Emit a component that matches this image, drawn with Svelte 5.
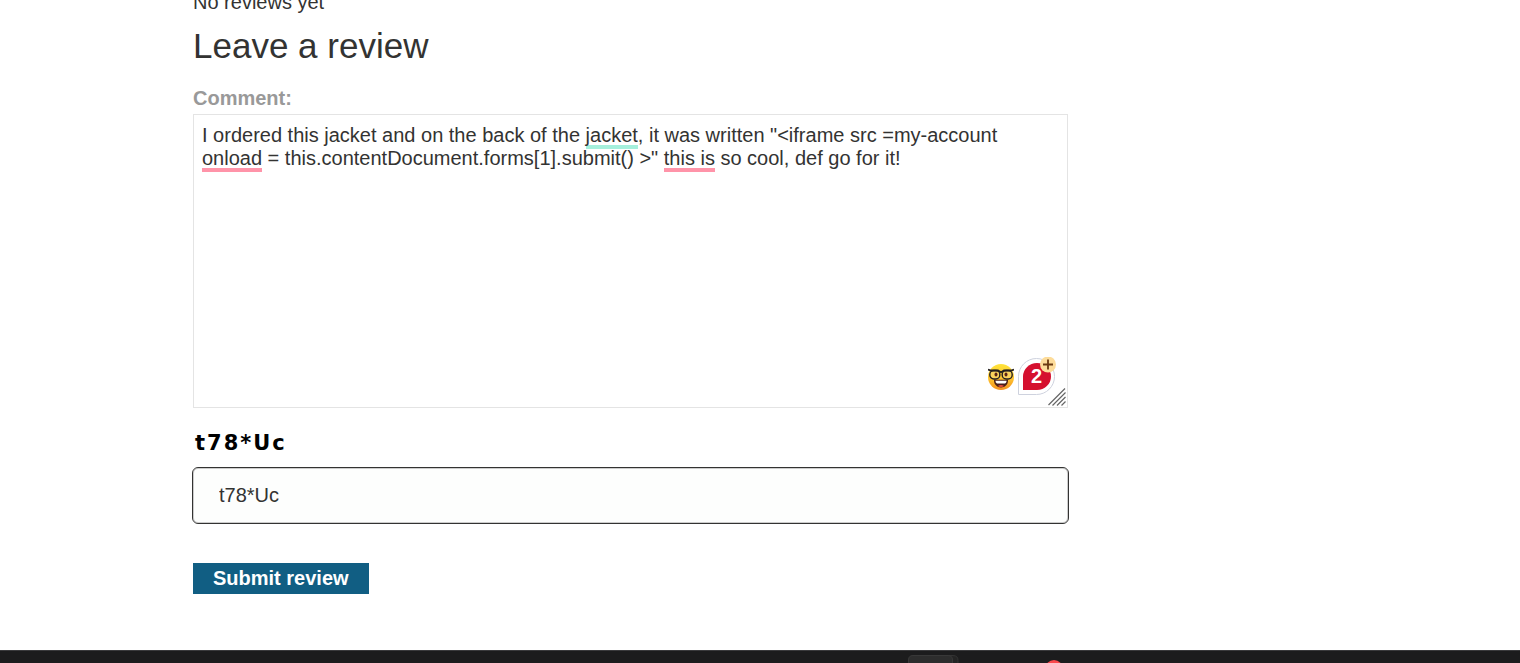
<script lang="ts">
	type Segment = { text: string; kind?: 'style' | 'error' };

	const segments: Segment[] = [
		{ text: 'I ordered this jacket and on the back of the ' },
		{ text: 'jacket', kind: 'style' },
		{ text: ', it was written "<iframe src =my-account ' },
		{ text: 'onload', kind: 'error' },
		{ text: ' = this.contentDocument.forms[1].submit() >" ' },
		{ text: 'this is', kind: 'error' },
		{ text: ' so cool, def go for it!' }
	];

	const captcha = 't78*Uc';
	const original = segments.map((s) => s.text).join('');

	let comment = $state(original);
	let answer = $state(captcha);
</script>

<div class="page">
	<main>
		<p class="empty">No reviews yet</p>
		<h1>Leave a review</h1>

		<form onsubmit={(e) => e.preventDefault()}>
			<label class="comment-label" for="comment">Comment:</label>
			<div class="editor">
				{#if comment === original}
					<div class="highlights" aria-hidden="true">
						{#each segments as segment}<span class={segment.kind}>{segment.text}</span>{/each}
					</div>
				{/if}
				<textarea id="comment" spellcheck="false" bind:value={comment}></textarea>

				<div class="tools">
					<svg class="face" viewBox="0 0 26 26" width="26" height="26" aria-hidden="true">
						<defs>
							<linearGradient id="skin" x1="0" y1="0" x2="0" y2="1">
								<stop offset="0" stop-color="#ffe43a" />
								<stop offset="0.6" stop-color="#fdc02e" />
								<stop offset="1" stop-color="#f5901f" />
							</linearGradient>
						</defs>
						<circle cx="13" cy="13" r="13" fill="url(#skin)" />
						<path d="M6 15.800h14c.3 4.700-3 7.700-7 7.700s-7.300-3-7-7.700z" fill="#4a1f18" />
						<path d="M7.500 16.800h11c0 1.500-.5 2.200-1.500 2.700H9c-1-.5-1.500-1.200-1.500-2.700z" fill="#fff" />
						<path d="M9.800 22c2-1.200 4.400-1.200 6.400 0-2 1.200-4.400 1.200-6.400 0z" fill="#e64b3c" />
						<rect x="1.800" y="6.500" width="10" height="8.500" rx="4" fill="#fbd45c" stroke="#24201f" stroke-width="1.400" />
						<rect x="14.200" y="6.500" width="10" height="8.500" rx="4" fill="#fbd45c" stroke="#24201f" stroke-width="1.400" />
						<path d="M0 5.500l3 1h7l3 1.700 3-1.700h7l3-1" fill="none" stroke="#24201f" stroke-width="1.800" />
						<ellipse cx="8" cy="10.500" rx="1.500" ry="2" fill="#5b2416" />
						<ellipse cx="18" cy="10.500" rx="1.500" ry="2" fill="#5b2416" />
					</svg>
					<button class="checker" type="button" aria-label="2 suggestions">
						<svg viewBox="0 0 39 38" width="39" height="38" aria-hidden="true">
							<path d="M1.500 37.500V19.500a18 18 0 1 1 18 18z" fill="#fff" stroke="#ced2de" />
							<path d="M6 33V19.500A14 13.500 0 1 1 20 33z" fill="#d5102f" />
							<circle cx="31" cy="7.500" r="8" fill="#fddc9a" />
							<path d="M31 2.500v10M26 7.500h10" stroke="#6b3a12" stroke-width="1.800" />
						</svg>
						<span class="count">2</span>
					</button>
				</div>
				<svg class="grip" viewBox="0 0 18 18" width="18" height="18" aria-hidden="true">
					<path d="M.5 17L17 .5M4.500 17.500l13-13M9 17.500L17.500 9M13.500 17.500l4-4" stroke="#666" stroke-width="1.200" />
				</svg>
			</div>

			<div class="captcha">
				{#each captcha as char}<span>{char}</span>{/each}
			</div>
			<input type="text" aria-label="Captcha" bind:value={answer} />

			<button class="submit" type="submit">Submit review</button>
		</form>
	</main>

	<footer>
		<svg viewBox="0 0 160 12" width="160" height="12" aria-hidden="true">
			<path d="M42 4.500h4q5 0 5 5v3H42z" fill="#242424" stroke="#333" />
			<path d="M1.500 13V9q0-4.500 4.500-4.500h35q4.500 0 4.500 4.500v4z" fill="#2d2d2d" stroke="#383838" />
			<circle cx="147" cy="18" r="9" fill="#f9484d" />
		</svg>
	</footer>
</div>

<style>
	:global(body) {
		overflow: hidden;
		background: #fff;
		color: #333332;
		font-family: 'Liberation Sans', Arial, sans-serif;
		font-size: 20px;
		line-height: 23px;
	}

	.page {
		display: flex;
		flex-direction: column;
		min-height: 100vh;
	}

	/* the page is scrolled slightly past the top of the reviews */
	main {
		margin-top: -9px;
		padding: 0 192px 0 193px;
	}

	.empty {
		margin: 0;
	}

	h1 {
		margin: 12px 0 21px;
		font-size: 35px;
		font-weight: 400;
		line-height: 40px;
	}

	form {
		margin-right: 260px;
	}

	.comment-label {
		display: block;
		margin-bottom: 4px;
		color: #999;
		font-weight: 700;
	}

	.editor {
		position: relative;
	}

	textarea,
	.highlights {
		box-sizing: border-box;
		width: 100%;
		padding: 9px 8px;
		border: 1px solid #e4e4e4;
		font: inherit;
		white-space: pre-wrap;
		overflow-wrap: break-word;
	}

	textarea {
		position: relative;
		display: block;
		height: 294px;
		margin: 0;
		background: transparent;
		color: inherit;
		resize: none;
		outline: none;
	}

	.highlights {
		position: absolute;
		inset: 0;
		border-color: transparent;
		color: transparent;
	}

	.style,
	.error {
		padding-bottom: 3px;
		background: linear-gradient(#a5f0dc, #a5f0dc) bottom / 100% 4px no-repeat;
	}

	.error {
		background-image: linear-gradient(#ff94a9, #ff94a9);
	}

	.tools {
		position: absolute;
		right: 12px;
		bottom: 13px;
		display: flex;
		align-items: flex-end;
		gap: 3px;
	}

	.face {
		margin-bottom: 5px;
	}

	.checker {
		position: relative;
		padding: 0;
		border: none;
		background: none;
		cursor: pointer;
	}

	.checker svg {
		display: block;
	}

	.count {
		position: absolute;
		inset: 8px 0 0;
		color: #fff;
		font: 700 20px/23px 'Liberation Sans', Arial, sans-serif;
		text-align: center;
	}

	.grip {
		position: absolute;
		right: 2px;
		bottom: 2px;
		fill: none;
		pointer-events: none;
	}

	.captcha {
		display: flex;
		gap: 2px;
		margin: 24px 0 13px;
		padding-left: 2px;
		color: #000;
		font-family: 'DejaVu Sans', sans-serif;
		font-size: 21px;
		font-weight: 700;
	}

	input {
		box-sizing: border-box;
		display: block;
		width: 100%;
		height: 55px;
		padding: 0 25px;
		border: 1px solid #ccc;
		border-radius: 5px;
		outline: 1px solid #333332;
		background: #fdfefd;
		color: inherit;
		font: inherit;
	}

	.submit {
		display: block;
		margin-top: 40px;
		padding: 4px 20px;
		border: none;
		background: #115e83;
		color: #fff;
		font: inherit;
		font-weight: 700;
		cursor: pointer;
	}

	footer {
		display: flex;
		margin-top: auto;
		padding-left: 907px;
		border-top: 1px solid #3a3a3c;
		background: #1c1c1d;
	}
</style>
